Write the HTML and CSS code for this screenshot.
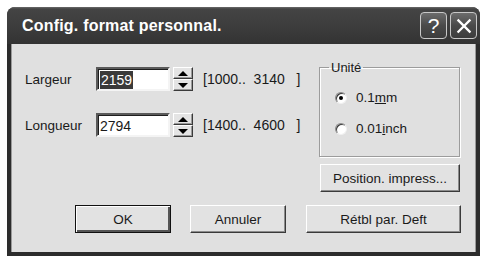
FILE: index.html
```html
<!DOCTYPE html>
<html lang="fr">

<head>
    <meta charset="UTF-8">
    <title>Config. format personnal.</title>
    <link rel="stylesheet" href="styles.css">
</head>

<body>
    <div class="window">
        <div class="titlebar">
            <span class="title">Config. format personnal.</span>
            <div class="caption-buttons">
                <button class="cap-btn">?</button>
                <button class="cap-btn">
                    <svg viewBox="0 0 16 16">
                        <path d="M3 3L13 13M13 3L3 13" stroke="#fff" stroke-width="2" stroke-linecap="square" fill="none"></path>
                    </svg>
                </button>
            </div>
        </div>
        <div class="client">
            <div class="main">
                <div class="fields">
                    <div class="field-row">
                        <label class="field-label">Largeur</label>
                        <div class="edit"><span class="sel">2159</span></div>
                        <div class="spin">
                            <span class="spin-btn"><span class="arrow-up"></span></span>
                            <span class="spin-btn"><span class="arrow-down"></span></span>
                        </div>
                        <span class="range">[1000..  3140   ]</span>
                    </div>
                    <div class="field-row">
                        <label class="field-label">Longueur</label>
                        <div class="edit">2794</div>
                        <div class="spin">
                            <span class="spin-btn"><span class="arrow-up"></span></span>
                            <span class="spin-btn"><span class="arrow-down"></span></span>
                        </div>
                        <span class="range">[1400..  4600   ]</span>
                    </div>
                </div>
                <div class="side">
                    <fieldset class="group">
                        <legend>Unité</legend>
                        <label class="radio"><span class="radio-box checked"></span>0.1<u>m</u>m</label>
                        <label class="radio"><span class="radio-box"></span>0.01<u>i</u>nch</label>
                    </fieldset>
                    <button class="btn btn-wide">Position. impress...</button>
                </div>
            </div>
            <div class="actions">
                <button class="btn btn-default">OK</button>
                <button class="btn btn-cancel">Annuler</button>
                <button class="btn btn-reset">Rétbl par. Deft</button>
            </div>
        </div>
    </div>
</body>

</html>
```

FILE: styles.css
```css
* {
    box-sizing: border-box;
    margin: 0;
    padding: 0;
}

body {
    font-family: "Liberation Sans", Arial, sans-serif;
    font-size: 13px;
    color: #1a1a1a;
    background-color: #fff;
    padding: 7px;
}

.window {
    width: 473px;
    height: 249px;
    display: flex;
    flex-direction: column;
    background-color: #2c2c2c;
    border-radius: 8px 8px 0 0;
}

/* Title bar */
.titlebar {
    height: 37px;
    display: flex;
    align-items: center;
    justify-content: space-between;
    padding: 0 3px 0 15px;
    border-radius: 8px 8px 0 0;
    background: linear-gradient(#6a6a6a, #444 2px, #3d3d3d 50%, #333);
}

.title {
    color: #fff;
    font-weight: bold;
    font-size: 16px;
    letter-spacing: 0.2px;
}

.caption-buttons {
    display: flex;
    gap: 3px;
}

.cap-btn {
    width: 27px;
    height: 27px;
    display: flex;
    align-items: center;
    justify-content: center;
    border: 1px solid #c8c8c8;
    border-radius: 4px;
    background: linear-gradient(#6c6c6c, #4a4a4a 50%, #3c3c3c);
    color: #fff;
    font-family: "Liberation Sans", Arial, sans-serif;
    font-size: 21px;
    line-height: 1;
}

.cap-btn svg {
    width: 18px;
    height: 18px;
}

/* Client area */
.client {
    flex: 1;
    margin: 0 4px 4px;
    background-color: #e0e0e0;
    box-shadow: inset 1px 0 #9a9a9a, inset -1px 0 #9a9a9a;
    display: flex;
    flex-direction: column;
}

.main {
    display: flex;
    justify-content: space-between;
    padding: 16px 16px 0 14px;
    height: 148px;
}

.fields {
    padding-top: 7px;
    display: flex;
    flex-direction: column;
    gap: 22px;
}

.field-row {
    display: flex;
    align-items: center;
    height: 24px;
}

.field-label {
    width: 71px;
    font-size: 13.5px;
}

.edit {
    width: 74px;
    height: 24px;
    background-color: #fff;
    border: 2px solid;
    border-color: #5a5a5a #f4f4f4 #f4f4f4 #5a5a5a;
    box-shadow: inset 1px 1px #1e1e1e;
    padding: 2px 0 0 2px;
    font-size: 14px;
    line-height: 18px;
}

.sel {
    display: inline-block;
    background-color: #3a3a3a;
    color: #fff;
    padding: 0 1px;
}

.spin {
    width: 20px;
    height: 24px;
    margin-left: 3px;
    display: flex;
    flex-direction: column;
}

.spin-btn {
    flex: 1;
    display: flex;
    align-items: center;
    justify-content: center;
    background-color: #e4e4e4;
    border: 1px solid;
    border-color: #fff #3a3a3a #3a3a3a #fff;
    box-shadow: inset -1px -1px #9a9a9a;
}

.arrow-up,
.arrow-down {
    width: 0;
    height: 0;
    border-left: 5px solid transparent;
    border-right: 5px solid transparent;
}

.arrow-up {
    border-bottom: 5px solid #000;
}

.arrow-down {
    border-top: 5px solid #000;
}

.range {
    margin-left: 10px;
    white-space: pre;
    font-size: 14px;
}

/* Unit group */
.side {
    width: 141px;
    display: flex;
    flex-direction: column;
    align-items: flex-end;
}

.group {
    width: 141px;
    height: 98px;
    border: 1px solid #9c9c9c;
    box-shadow: 1px 1px #fff, inset 1px 1px #fff;
    padding: 7px 0 0 9px;
}

.group legend {
    padding: 0 2px;
    font-size: 13px;
    line-height: 15px;
}

.radio {
    display: flex;
    align-items: center;
    height: 31px;
    margin-left: 6px;
    font-size: 13.5px;
}

.radio-box {
    width: 12px;
    height: 12px;
    margin-right: 9px;
    border-radius: 50%;
    background-color: #fff;
    border: 1px solid;
    border-color: #8a8a8a #f0f0f0 #f0f0f0 #8a8a8a;
    box-shadow: inset 1px 1px #3a3a3a;
    display: flex;
    align-items: center;
    justify-content: center;
}

.radio-box.checked::after {
    content: "";
    width: 4px;
    height: 4px;
    border-radius: 50%;
    background-color: #000;
}

/* Buttons */
.btn {
    height: 28px;
    white-space: nowrap;
    font-family: "Liberation Sans", Arial, sans-serif;
    font-size: 13.5px;
    color: #1a1a1a;
    background-color: #e2e2e2;
    border: 1px solid;
    border-color: #fff #3a3a3a #3a3a3a #fff;
    box-shadow: inset -1px -1px #8c8c8c;
}

.btn-wide {
    width: 140px;
    margin-top: 7px;
}

.actions {
    display: flex;
    gap: 19px;
    padding: 13px 0 0 64px;
}

.btn-default {
    width: 96px;
    border-color: #111;
    box-shadow: inset 1px 1px #fff, inset -2px -2px #555;
}

.btn-cancel {
    width: 96px;
}

.btn-reset {
    width: 155px;
    margin-left: 1px;
}
```
